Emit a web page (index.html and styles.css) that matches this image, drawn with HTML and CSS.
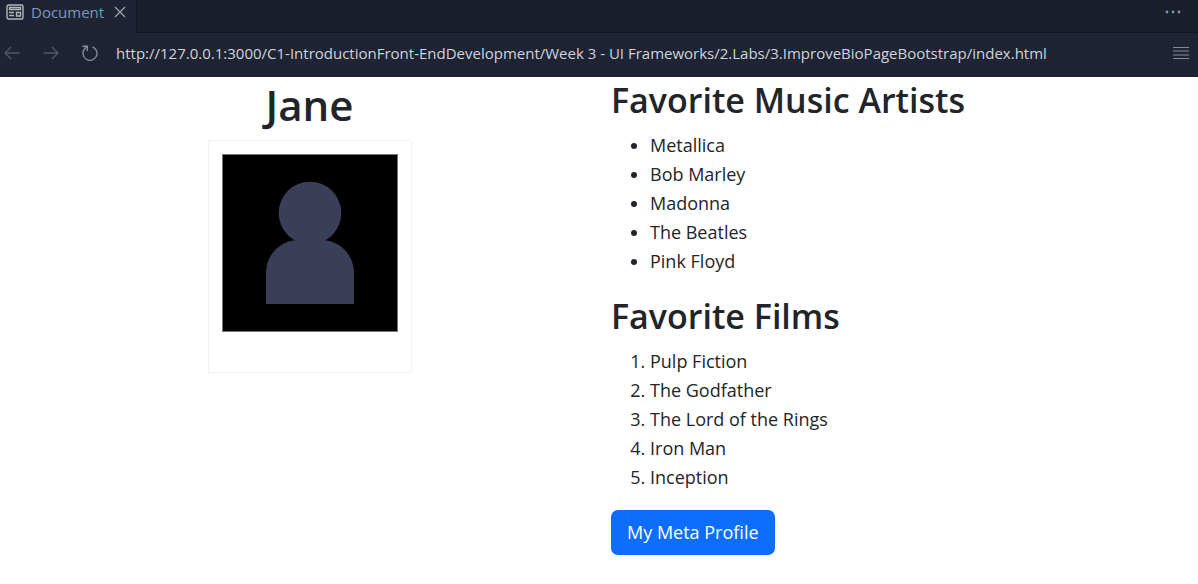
FILE: index.html
```html
<!DOCTYPE html>
<html lang="en">
<head>
<meta charset="utf-8">
<meta name="viewport" content="width=device-width, initial-scale=1">
<title>Document</title>
<link rel="stylesheet" href="styles.css">
</head>
<body>
<header class="browser">
  <div class="tabs">
    <div class="tab">
      <svg class="tab-icon" width="18" height="16" viewBox="0 0 18 16" fill="none" stroke="#b4b7bd" stroke-width="1.4"><rect x="1" y="1" width="16" height="14" rx="1.5"/><path d="M3.5 3.5h11v2h-11zM3 8.5h5M3 11.500h5M10.500 8.500h4v3.500h-4z"/></svg>
      <span class="tab-title">Document</span>
      <button class="icon-button" type="button" aria-label="Close tab"><svg width="12" height="12" viewBox="0 0 12 12" fill="none" stroke="#a0a5ae" stroke-width="1.2"><path d="M1 1l10 10M11 1L1 11"/></svg></button>
    </div>
    <div class="tab-space">
      <button class="icon-button" type="button" aria-label="More actions"><svg width="16" height="4" viewBox="0 0 16 4" fill="#8393ac"><circle cx="2" cy="2" r="1.4"/><circle cx="8" cy="2" r="1.4"/><circle cx="14" cy="2" r="1.4"/></svg></button>
    </div>
  </div>
  <div class="toolbar">
    <nav class="nav-buttons" aria-label="History">
      <button class="icon-button" type="button" aria-label="Back"><svg width="16" height="14" viewBox="0 0 16 14" fill="none" stroke="#50586a" stroke-width="1.3"><path d="M15.500 7H1M7 1L1 7l6 6"/></svg></button>
      <button class="icon-button" type="button" aria-label="Forward"><svg width="16" height="14" viewBox="0 0 16 14" fill="none" stroke="#50586a" stroke-width="1.3"><path d="M.5 7H15M9 1l6 6-6 6"/></svg></button>
      <button class="icon-button" type="button" aria-label="Reload"><svg width="16" height="16" viewBox="0 0 16 16" fill="none" stroke="#858b96" stroke-width="1.4"><path d="M10.500 1.800A7 7 0 1 1 2.500 4L5 1.300M.5 1.200H5.300V6"/></svg></button>
    </nav>
    <input class="address" type="text" aria-label="Address" value="http://127.0.0.1:3000/C1-IntroductionFront-EndDevelopment/Week 3 - UI Frameworks/2.Labs/3.ImproveBioPageBootstrap/index.html">
    <button class="icon-button" type="button" aria-label="Menu"><svg width="16" height="14" viewBox="0 0 16 14" stroke="#858c99" stroke-width="1.2"><path d="M0 1.500h16M0 5h16M0 9h16M0 12.500h16"/></svg></button>
  </div>
</header>
<main class="page">
  <section class="profile">
    <h1 class="name">Jane</h1>
    <svg class="portrait" width="204" height="233" viewBox="0 0 204 233" role="img" aria-label="Portrait of Jane">
      <rect x=".5" y=".5" width="203" height="232" fill="#fff" stroke="#f3f3f3"/>
      <rect x="14.500" y="14.500" width="175" height="177" fill="#000" stroke="#777"/>
      <circle cx="102" cy="73" r="31.300" fill="#3b3e58"/>
      <path d="M58 164v-31c0-19 15-33 33-33h22c18 0 33 14 33 33v31z" fill="#3b3e58"/>
    </svg>
  </section>
  <section class="favorites">
    <h2 class="heading">Favorite Music Artists</h2>
    <ul class="list">
      <li>Metallica</li>
      <li>Bob Marley</li>
      <li>Madonna</li>
      <li>The Beatles</li>
      <li>Pink Floyd</li>
    </ul>
    <h2 class="heading">Favorite Films</h2>
    <ol class="list">
      <li>Pulp Fiction</li>
      <li>The Godfather</li>
      <li>The Lord of the Rings</li>
      <li>Iron Man</li>
      <li>Inception</li>
    </ol>
    <a class="profile-link" href="#">My Meta Profile</a>
  </section>
</main>
</body>
</html>
```

FILE: styles.css
```css
* { box-sizing: border-box; }

body {
  margin: 0;
  background: #fff;
  color: #212529;
  font: 18px/29px "Segoe UI", "Open Sans", sans-serif;
}

.browser { background: #1e2433; }

.tabs {
  display: flex;
  height: 33px;
}

.tab {
  display: flex;
  align-items: center;
  padding: 0 10px 9px 6px;
}

.tab-icon { margin-right: 7px; }

.tab-title {
  margin-right: 10px;
  color: #7e95bd;
  font-size: 15px;
  line-height: 24px;
}

.tab-space {
  display: flex;
  flex: 1;
  justify-content: flex-end;
  padding: 10px 17px 0 0;
  background: #19202c;
  border-bottom: 1px solid #12161f;
  border-left: 1px solid #12161f;
}

.icon-button {
  display: flex;
  align-items: center;
  padding: 0;
  border: 0;
  background: none;
  cursor: pointer;
}

.tab-space .icon-button { height: 4px; }

.toolbar {
  display: flex;
  align-items: center;
  height: 44px;
  padding: 0 9px 4px 4px;
}

.nav-buttons {
  display: flex;
  gap: 23px;
}

.address {
  flex: 1;
  min-width: 0;
  margin: 0 16px 0 18px;
  padding: 0;
  border: 0;
  outline: 0;
  background: none;
  color: #d0d3da;
  font: 15px/24px "Segoe UI", "Open Sans", sans-serif;
}

.page {
  display: grid;
  grid-template-columns: 1fr 1fr;
  padding-left: 24px;
}

.profile {
  display: flex;
  flex-direction: column;
  align-items: center;
  padding-right: 16px;
}

.name {
  margin: 0;
  padding-bottom: 8px;
  font-size: 42px;
  font-weight: 600;
  line-height: 55px;
}

.heading {
  margin: 0 0 8px;
  font-size: 34px;
  font-weight: 600;
  line-height: 46px;
}

.list {
  margin: 0 0 17px;
  padding-left: 39px;
}

.profile-link {
  display: inline-block;
  margin-top: 1px;
  padding: 8px 16px;
  border-radius: 7px;
  background: #0d6efd;
  color: #fff;
  text-decoration: none;
}
```
